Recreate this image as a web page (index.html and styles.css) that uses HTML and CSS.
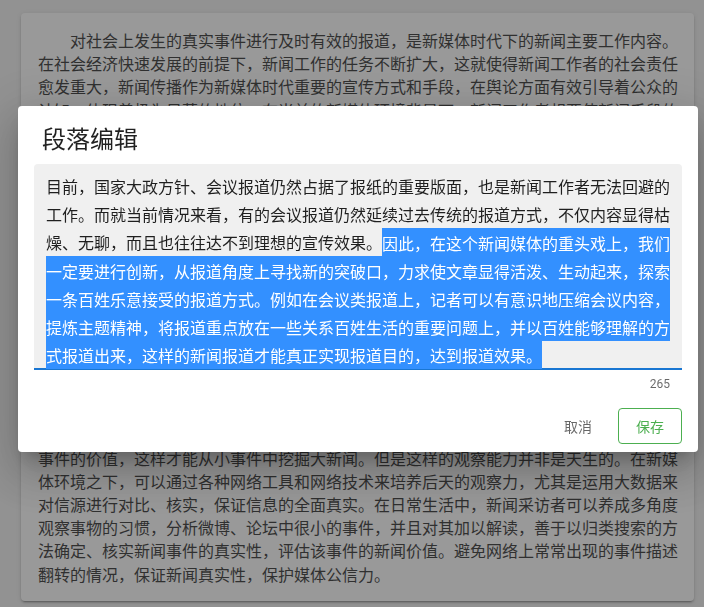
FILE: index.html
```html
<!DOCTYPE html>
<html lang="zh-CN">
<head>
<meta charset="utf-8">
<title>段落编辑</title>
<link rel="stylesheet" href="styles.css">
</head>
<body>
<main class="page">
  <article class="doc-card">
    <p class="para para-indent">对社会上发生的真实事件进行及时有效的报道，是新媒体时代下的新闻主要工作内容。在社会经济快速发展的前提下，新闻工作的任务不断扩大，这就使得新闻工作者的社会责任愈发重大，新闻传播作为新媒体时代重要的宣传方式和手段，在舆论方面有效引导着公众的认知，体现着极为显著的地位，在当前的新媒体环境背景下，新闻工作者想要使新闻手段的作用得到充分发挥，就必须不断提升自身的综合素质，增强新闻敏感性。新闻敏感性是新闻工作者在日常工作中必须具备的一项基本能力，它决定了新闻工作者能否在纷繁复杂的社会现象中及时发现有价值的新闻线索。在新媒体时代，信息传播的速度越来越快，传播的渠道也越来越多，新闻工作者如果不能在第一时间捕捉到新闻线索，就很容易错失报道的最佳时机。因此，新闻工作者要时刻保持对社会生活的关注，善于从平凡的小事中发现不平凡的意义，透过现象看本质，挖掘出新闻背后更深层次的内涵。同时，新闻工作者还要不断拓宽自己的知识面，学习政治、经济、文化、法律等各方面的知识，提高自身的理论水平和分析判断能力，只有这样，才能在面对各种突发事件时保持清醒的头脑，做出准确的判断。此外，新闻工作者还应当深入基层、深入群众，倾听群众的呼声，了解群众的需求，从群众的日常生活中寻找新闻素材，使新闻报道更加贴近实际、贴近生活、贴近群众。在新闻采访过程中，新闻工作者要具备敏锐的洞察力，能够从大量的信息中筛选出有价值的内容，并对其进行深入的分析和研究，准确把握新闻事件的本质和规律。与此同时，还要学会换位思考，站在受众的角度去看待问题，了解受众真正关心的是什么，从而使新闻报道更具针对性和实效性。新闻工作者要善于发现小</p>
    <p class="para">事件的价值，这样才能从小事件中挖掘大新闻。但是这样的观察能力并非是天生的。在新媒体环境之下，可以通过各种网络工具和网络技术来培养后天的观察力，尤其是运用大数据来对信源进行对比、核实，保证信息的全面真实。在日常生活中，新闻采访者可以养成多角度观察事物的习惯，分析微博、论坛中很小的事件，并且对其加以解读，善于以归类搜索的方法确定、核实新闻事件的真实性，评估该事件的新闻价值。避免网络上常常出现的事件描述翻转的情况，保证新闻真实性，保护媒体公信力。</p>
  </article>
</main>

<div class="scrim"></div>

<div class="dialog-layer">
  <section class="dialog" role="dialog" aria-label="段落编辑">
    <h2 class="dialog-title">段落编辑</h2>
    <div class="dialog-body">
      <div class="field">
        <div class="field-text">目前，国家大政方针、会议报道仍然占据了报纸的重要版面，也是新闻工作者无法回避的工作。而就当前情况来看，有的会议报道仍然延续过去传统的报道方式，不仅内容显得枯燥、无聊，而且也往往达不到理想的宣传效果。<span class="sel">因此，在这个新闻媒体的重头戏上，我们一定要进行创新，从报道角度上寻找新的突破口，力求使文章显得活泼、生动起来，探索一条百姓乐意接受的报道方式。例如在会议类报道上，记者可以有意识地压缩会议内容，提炼主题精神，将报道重点放在一些关系百姓生活的重要问题上，并以百姓能够理解的方式报道出来，这样的新闻报道才能真正实现报道目的，达到报道效果。</span></div>
      </div>
      <div class="field-details"><span class="counter">265</span></div>
    </div>
    <div class="dialog-actions">
      <button class="btn btn-text" type="button">取消</button>
      <button class="btn btn-outlined" type="button">保存</button>
    </div>
  </section>
</div>
</body>
</html>
```

FILE: styles.css
```css
html, body {
  margin: 0;
  padding: 0;
}

body {
  width: 704px;
  height: 607px;
  overflow: hidden;
  background: #f2f2f2;
  font-family: "Noto Sans CJK SC", "Noto Sans", sans-serif;
}

.page {
  padding: 13px 10px 0 21px;
}

.doc-card {
  background: #ffffff;
  border-radius: 4px;
  box-shadow: 0 3px 1px -2px rgba(0, 0, 0, 0.2), 0 2px 2px 0 rgba(0, 0, 0, 0.14), 0 1px 5px 0 rgba(0, 0, 0, 0.12);
  padding: 16px 16px 15px 17px;
  color: #3e3e3e;
  font-size: 16px;
  line-height: 23.2px;
}

.para {
  margin: 0;
}

.para-indent {
  text-indent: 2em;
}

.scrim {
  position: fixed;
  inset: 0;
  background: rgba(33, 33, 33, 0.46);
}

.dialog-layer {
  position: fixed;
  inset: 0;
  display: flex;
  justify-content: flex-start;
  align-items: flex-start;
  padding: 106px 0 0 18px;
}

.dialog {
  width: 680px;
  background: #ffffff;
  border-radius: 4px;
  box-shadow: 0 11px 15px -7px rgba(0, 0, 0, 0.2), 0 24px 38px 3px rgba(0, 0, 0, 0.14), 0 9px 46px 8px rgba(0, 0, 0, 0.12);
}

.dialog-title {
  margin: 0;
  padding: 16px 24px 10px;
  font-size: 24px;
  line-height: 32px;
  font-weight: 400;
  color: rgba(0, 0, 0, 0.87);
}

.dialog-body {
  padding: 0 16px;
}

.field {
  background: #f0f0f0;
  border-radius: 4px 4px 0 0;
  padding: 8px 9px 0 12px;
  border-bottom: 2px solid #1976d2;
}

.field-text {
  font-size: 16px;
  line-height: 28px;
  color: rgba(0, 0, 0, 0.87);
}

.sel {
  background: #3390ff;
  color: #ffffff;
  padding: 2.5px 0;
}

.field-details {
  min-height: 14px;
  padding: 8px 12px 0;
  margin-bottom: 8px;
  display: flex;
  justify-content: flex-end;
}

.counter {
  font-family: Roboto, "Noto Sans", sans-serif;
  font-size: 12px;
  line-height: 12px;
  color: rgba(0, 0, 0, 0.6);
}

.dialog-actions {
  display: flex;
  justify-content: flex-end;
  gap: 8px;
  padding: 8px 16px;
}

.btn {
  height: 36px;
  min-width: 64px;
  padding: 0 16px;
  border-radius: 4px;
  border: 1px solid transparent;
  background: transparent;
  font-family: "Noto Sans CJK SC", "Noto Sans", sans-serif;
  font-size: 14px;
  cursor: pointer;
}

.btn-text {
  color: rgba(0, 0, 0, 0.6);
}

.btn-outlined {
  border-color: #4caf50;
  color: #4caf50;
}
```
